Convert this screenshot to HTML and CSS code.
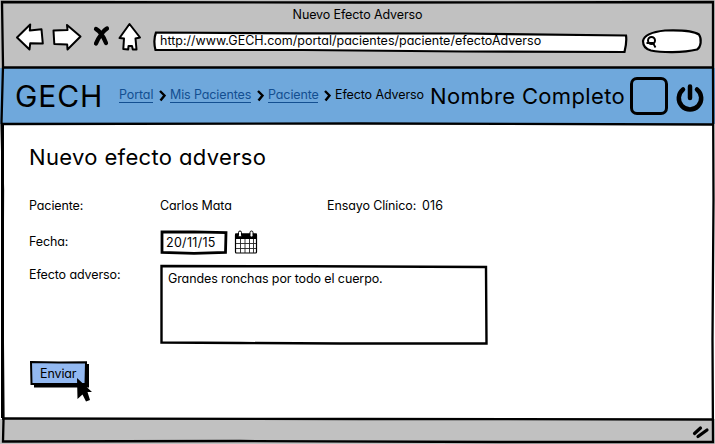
FILE: index.html
```html
<!DOCTYPE html>
<html lang="es">
<head>
<meta charset="utf-8">
<title>Nuevo Efecto Adverso</title>
<link rel="stylesheet" href="styles.css">
</head>
<body>
<div class="window">
  <header class="chrome">
    <div class="window-title">Nuevo Efecto Adverso</div>
    <div class="toolbar">
      <svg class="nav" width="130" height="32" viewBox="0 0 130 32">
        <g fill="#fff" stroke="#000" stroke-width="2" stroke-linejoin="round">
          <path d="M2 16.500L15.200 3.500L14.800 9.500L26.500 8.300L27.800 22.500L15.200 22.300L14.500 28.500Z"/>
          <path d="M38.500 9.500L52.500 9L52 4L65.500 15.500L52.500 28.500L52.200 23.500L39.300 23Z"/>
          <path d="M114.500 3L125 16.500L120.500 17.500L121.500 28.500L117.800 28.500L117 25H113.500L113.200 28.500L108.300 28L109 17.500L104.500 17Z"/>
        </g>
        <path d="M81 8C85 10 89 17 91 22M92 7.500C89 9 83 17 81 22.500" fill="none" stroke="#000" stroke-width="4.200" stroke-linecap="round"/>
      </svg>
      <div class="address">
        <svg class="sketch" width="475" height="24" viewBox="0 0 475 24"><path d="M3 2.500L145 3.300L310 3.500L473 5.500Q474 12 471.500 22L310 21.500L150 20L2.500 20Q0 10 3 2.500Z" fill="#fff" stroke="#000" stroke-width="2.200"/></svg>
        <span class="url">http://www.GECH.com/portal/pacientes/paciente/efectoAdverso</span>
      </div>
      <svg class="search" width="62" height="27" viewBox="0 0 62 27">
        <path d="M2 13C3 7 10 4 24 2.500C38 2 52 2.500 58 6.500C61 11 60 19 56 21.500C42 25 20 24.500 10 22.500C4 21 2 17 2 13Z" fill="#fff" stroke="#000" stroke-width="2.200"/>
        <circle cx="10.500" cy="12.500" r="3.500" fill="none" stroke="#000" stroke-width="2"/><path d="M5.500 15H12L14.500 19.500" fill="none" stroke="#000" stroke-width="1.800"/>
      </svg>
    </div>
  </header>
  <nav class="appbar">
    <div class="brand">GECH</div>
    <div class="crumbs">
      <a class="c1">Portal</a><svg width="8" height="12" viewBox="0 0 8 12"><path d="M1 1L5.500 5.500L1.500 10.500" /></svg>
      <a class="c2">Mis Pacientes</a><svg width="8" height="12" viewBox="0 0 8 12"><path d="M1 1L5.500 5.500L1.500 10.500" /></svg>
      <a class="c3">Paciente</a><svg width="8" height="12" viewBox="0 0 8 12"><path d="M1 1L5.500 5.500L1.500 10.500" /></svg>
      <span class="c4">Efecto Adverso</span>
    </div>
    <div class="user">Nombre Completo</div>
    <div class="avatar"></div>
    <svg class="power" width="28" height="28" viewBox="0 0 28 28"><path d="M7 5.500A11.200 11.200 0 1 0 21 5.500M14 2.500V14" fill="none" stroke="#000" stroke-width="4.500" stroke-linecap="round"/></svg>
  </nav>
  <main class="content">
    <h1>Nuevo efecto adverso</h1>
    <div class="row row-patient">
      <div class="label">Paciente:</div><div class="value">Carlos Mata</div><div class="trial">Ensayo Clínico:</div><div class="number">016</div>
    </div>
    <div class="row row-date">
      <div class="label">Fecha:</div>
      <div class="date">
        <svg class="sketch" width="69" height="25" viewBox="0 0 69 25"><path d="M2 2L34 1.800L66 2.500L65.500 22.500L34 23.300L2 22.500Z" fill="#fff" stroke="#000" stroke-width="2.800"/></svg>
        <span>20/11/15</span>
      </div>
      <svg class="calendar" width="24" height="24" viewBox="0 0 24 24">
        <rect x="1.500" y="4" width="21" height="19" rx="1" fill="#fff" stroke="#000" stroke-width="1.200"/>
        <path d="M1 3.500H23V9H1Z"/>
        <path d="M6.500 9V23M11 9V23M15.500 9V23M19.500 9V23M2 13.500H22M2 18.500H22" stroke="#222" stroke-width=".9"/>
        <rect x="4.500" y="1" width="3" height="6" rx="1.500" fill="#fff" stroke="#000"/><rect x="16" y="1" width="3" height="6" rx="1.500" fill="#fff" stroke="#000"/>
      </svg>
    </div>
    <div class="row row-effect">
      <div class="label wide">Efecto adverso:</div>
      <div class="area">
        <svg class="sketch" width="329" height="81" viewBox="0 0 329 81"><path d="M1.500 2L150 2.300L326 3L326.500 79.500L180 79.500L80 79L1.500 78.500Z" fill="#fff" stroke="#000" stroke-width="2.400"/></svg>
        <span>Grandes ronchas por todo el cuerpo.</span>
      </div>
    </div>
    <div class="submit">
      <svg class="sketch" width="66" height="46" viewBox="0 0 66 46">
        <path d="M5 4H60V27.500H5Z"/>
        <path d="M2 2L30 2.500L57 2.300L56.500 24L2.500 24Z" fill="#93b9f1" stroke="#000" stroke-width="2"/>
      </svg>
      <span>Enviar</span>
      <svg class="cursor" width="18" height="25" viewBox="0 0 18 25"><path d="M1 0L16 14H11.500L14 22L10 23.500L6.500 16.500L1.500 21Z"/></svg>
    </div>
  </main>
  <footer class="status">
    <svg width="18" height="14" viewBox="0 0 18 14"><path d="M2.500 8.500L8.500 3M6 11.500L15 5" fill="none" stroke="#000" stroke-width="3.200" stroke-linecap="round"/></svg>
  </footer>
  <svg class="frame" width="715" height="444" viewBox="0 0 715 444">
    <g fill="none" stroke="#000" stroke-width="2.300">
      <path d="M2 2L360 2.500L713 2L713 70L713.500 200L712.500 340L713 442L500 442L240 441L3 441.500L3.500 420L2.500 300L3 190L1.500 122L3 66Z"/>
      <path d="M2 67.500H713M2 124L360 123.500L713 124.500M2 418.500L360 419L713 419.500"/>
    </g>
    <path d="M2.500 124V418" stroke="#000" stroke-width="3"/>
  </svg>
</div>
</body>
</html>
```
FILE: styles.css
```css
* { box-sizing: border-box; }
body {
  margin: 0;
  background: #fff;
  color: #000;
  font-family: Inter, "Open Sans", sans-serif;
  font-feature-settings: "cv11", "ss03";
  font-size: 12.5px;
  line-height: 18px;
  letter-spacing: -.11px;
  white-space: nowrap;
}
svg { display: block; flex: none; }
.window { position: relative; width: 715px; height: 444px; overflow: hidden; display: flex; flex-direction: column; }
.frame { position: absolute; inset: 0; pointer-events: none; }
.sketch { position: absolute; left: 0; top: 0; z-index: -1; }

.chrome { height: 68px; background: #c1c1c1; padding-top: 6px; }
.window-title { height: 16px; line-height: 17px; text-align: center; }
.toolbar { display: flex; padding: 0 12px 0 15px; }
.nav { margin-top: -1px; }
.address { position: relative; z-index: 0; width: 475px; height: 24px; margin: 8px 0 0 8px; padding: 2px 0 0 7px; }
.url { letter-spacing: 0; }
.search { margin: 6px 0 0 13px; }

.appbar { height: 56px; background: #6fa8dc; display: flex; align-items: center; padding-left: 15px; }
.brand { width: 104px; font-size: 30px; line-height: 36px; letter-spacing: .9px; }
.crumbs { display: flex; align-items: center; width: 311px; height: 18px; margin-top: -3px; }
.crumbs a { color: #134f91; border-bottom: 1px solid #134f91; height: 17px; }
.crumbs svg { margin: 3px 3px 0 6px; }
.crumbs path { fill: none; stroke: #000; stroke-width: 2.4; }
.c1 { width: 34px; }
.c2 { width: 81px; }
.c3 { width: 50px; }
.user { width: 200px; font-size: 22px; line-height: 28px; letter-spacing: .35px; }
.avatar { width: 38px; height: 38px; border: 3px solid #000; border-radius: 7px; }
.power { margin: 3px 0 0 8px; }

.content { height: 295px; padding: 19px 0 0 29px; }
h1 { margin: 0; font-size: 22px; line-height: 28px; font-weight: 400; letter-spacing: .35px; }
.row { display: flex; }
.row-patient { margin-top: 26px; height: 16px; }
.label { width: 131px; }
.value { width: 167px; }
.trial { width: 95px; }
.number { letter-spacing: .1px; }
.row-date { margin-top: 17px; height: 26px; }
.row-date .label { padding-top: 3px; }
.date { position: relative; z-index: 0; width: 74px; height: 25px; padding: 4px 0 0 6px; letter-spacing: .3px; }
.row-effect { margin-top: 8px; height: 82px; }
.row-effect .label { padding-top: 2px; }
.area { position: relative; z-index: 0; width: 329px; height: 81px; padding: 6px 0 0 8px; }
.submit { position: relative; z-index: 0; width: 66px; height: 46px; margin-top: 14px; padding: 5px 0 0 11px; }
.cursor { position: absolute; left: 47px; top: 18px; }
.status { height: 25px; background: #c1c1c1; display: flex; justify-content: flex-end; padding: 6px 5px 0 0; }
```
